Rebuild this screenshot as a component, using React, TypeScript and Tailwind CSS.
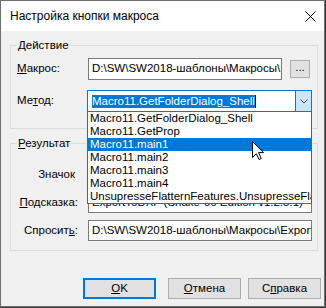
const items = [
  "Macro11.GetFolderDialog_Shell",
  "Macro11.GetProp",
  "Macro11.main1",
  "Macro11.main2",
  "Macro11.main3",
  "Macro11.main4",
  "UnsupresseFlatternFeatures.UnsupresseFlatternFeatures",
];

function TextBox({ value, width }: { value: string; width: string }) {
  return (
    <div
      className={`${width} h-full border border-[#7a7a7a] bg-white pl-[3px] flex items-center overflow-hidden whitespace-nowrap`}
    >
      {value}
    </div>
  );
}

function Button({ children, focused }: { children: React.ReactNode; focused?: boolean }) {
  return (
    <div
      className={
        focused
          ? "w-[73px] h-[21px] border-2 border-[#0078d7] bg-[#e1e1e1] flex items-center justify-center"
          : "w-[73px] h-[21px] border border-[#adadad] bg-[#e1e1e1] flex items-center justify-center"
      }
    >
      {children}
    </div>
  );
}

export default function App() {
  return (
    <div className="w-[326px] h-[308px] bg-[#3c3c3c] font-['Liberation_Sans',Arial,sans-serif] text-black">
      <div className="relative w-[325px] h-[307px] border border-[#6f6f6f] bg-[#f0f0f0] flex flex-col">
        {/* title bar */}
        <div className="h-[30px] bg-white flex items-center justify-between pl-[9px] pr-[8px] text-[12px]">
          <span>Настройка кнопки макроса</span>
          <svg width="11" height="11" viewBox="0 0 11 11">
            <path d="M0.5 0.5 L10.5 10.5 M10.5 0.5 L0.5 10.5" stroke="#000" strokeWidth="1" />
          </svg>
        </div>

        <div className="flex-1 pt-[14px] text-[11.5px] flex flex-col">
          {/* Действие */}
          <div className="relative ml-[9px] mr-[6px] border border-[#dcdcdc] pt-[12px] pb-[16px] flex flex-col gap-[10px]">
            <span className="absolute left-[6px] top-[-8px] px-[1px] bg-[#f0f0f0] leading-[14px]">
              <u>Д</u>ействие
            </span>
            <div className="h-[22px] flex items-center pl-[6px]">
              <span className="w-[71px]">
                <u>М</u>акрос:
              </span>
              <TextBox width="w-[194px]" value="D:\SW\SW2018-шаблоны\Макросы\ExportToDXF.swp" />
              <div className="ml-[8px] w-[20px] h-[18px] border border-[#adadad] bg-[#e1e1e1] flex items-center justify-center leading-none pb-[3px]">
                ...
              </div>
            </div>
            <div className="h-[22px] flex items-center pl-[6px]">
              <span className="w-[70px]">
                Ме<u>т</u>од:
              </span>
              <div className="relative w-[225px] h-full border border-[#0078d7] bg-white flex">
                <div className="flex-1 pl-[4px] flex items-center whitespace-nowrap overflow-hidden">
                  <span className="bg-[#0078d7] text-white leading-[13px]">Macro11.GetFolderDialog_Shell</span>
                  <span className="w-[1px] h-[13px] bg-black" />
                </div>
                <div className="w-[16px] h-full border-l border-[#0078d7] bg-[#cce4f7] flex items-center justify-center">
                  <svg width="8" height="5" viewBox="0 0 8 5">
                    <path d="M0.5 0.5 L4 4 L7.5 0.5" stroke="#444" fill="none" />
                  </svg>
                </div>
                {/* open list */}
                <div className="absolute left-[-1px] top-[20px] w-[225px] border border-[#0078d7] bg-white z-10 flex flex-col overflow-hidden">
                  {items.map((it, i) => (
                    <div
                      key={it}
                      className={
                        i === 2
                          ? "h-[13px] leading-[13px] pl-[2px] whitespace-nowrap bg-[#0078d7] text-white"
                          : "h-[13px] leading-[13px] pl-[2px] whitespace-nowrap"
                      }
                    >
                      {it}
                    </div>
                  ))}
                </div>
              </div>
            </div>
          </div>

          {/* Результат */}
          <div className="relative mt-[14px] ml-[9px] mr-[6px] border border-[#dcdcdc] pt-[20px] pb-[9px] flex flex-col">
            <span className="absolute left-[6px] top-[-8px] px-[1px] bg-[#f0f0f0] leading-[14px]">
              <u>Р</u>езультат
            </span>
            <div className="h-[22px] flex items-center">
              <span className="w-[77px] text-right pr-[13px]">Значок</span>
            </div>
            <div className="mt-[6px] h-[21px] flex items-center">
              <span className="w-[77px] text-right pr-[10px]">
                <u>П</u>одсказка:
              </span>
              <TextBox width="w-[224px]" value="ExportToDXF (Snake-66 Edition v1.2.5.1)" />
            </div>
            <div className="mt-[7px] h-[21px] flex items-center">
              <span className="w-[77px] text-right pr-[10px]">
                Спросит<u>ь</u>:
              </span>
              <TextBox width="w-[224px]" value="D:\SW\SW2018-шаблоны\Макросы\ExportToDXF.ini" />
            </div>
          </div>

          {/* buttons */}
          <div className="mt-[27px] flex justify-end pr-[3px]">
            <Button focused>
              <u>O</u>K
            </Button>
            <div className="ml-[12px]">
              <Button>
                <u>О</u>тмена
              </Button>
            </div>
            <div className="ml-[7px]">
              <Button>
                С<u>п</u>равка
              </Button>
            </div>
          </div>
        </div>

        {/* mouse pointer */}
        <svg className="absolute left-[251px] top-[140px] z-20" width="12" height="19" viewBox="0 0 12 19">
          <path d="M0.5 0.5 V16.5 L4.3 12.7 L7 18.5 L9.2 17.5 L6.6 11.6 H11.5 Z" fill="#fff" stroke="#000" strokeWidth="1" />
        </svg>
      </div>
    </div>
  );
}
